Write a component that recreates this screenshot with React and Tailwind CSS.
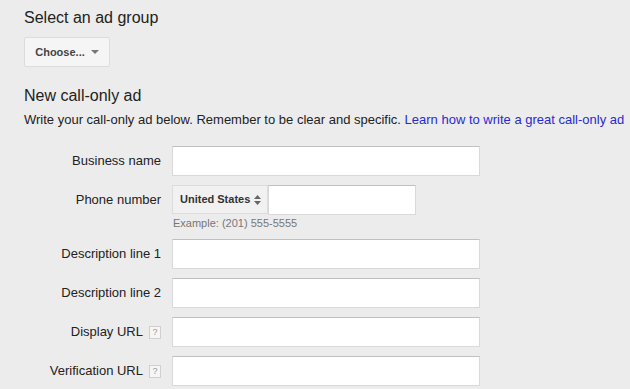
import React from 'react';

const Help = () => (
  <span className="ml-[6px] inline-flex h-[13px] w-[12px] items-center justify-center border border-[#d0d0d0] bg-[#f6f6f6] text-[9px] leading-none text-[#999]">
    ?
  </span>
);

const Field = ({ label, help, children }) => (
  <div className="flex items-start">
    <div className="flex h-[30px] w-[137px] items-center justify-end text-[13px] text-[#222]">
      {label}
      {help && <Help />}
    </div>
    <div className="ml-[11px]">{children}</div>
  </div>
);

const TextBox = ({ w = 'w-[308px]' }) => (
  <input
    className={`${w} h-[30px] border border-[#d9d9d9] border-t-[#c0c0c0] bg-white outline-none`}
  />
);

export default function App() {
  return (
    <div className="min-h-[389px] w-full bg-[#ececec] pl-[24px] pt-[8px] font-['Liberation_Sans',Arial,sans-serif] text-[#222]">
      <h2 className="text-[16px] leading-[20px]">Select an ad group</h2>
      <button className="mt-[9px] flex h-[30px] w-[86px] items-center justify-center gap-[6px] rounded-[2px] border border-[#dcdcdc] bg-[#f5f5f5] text-[11px] font-bold text-[#444]">
        Choose...
        <span className="h-0 w-0 border-x-[4px] border-t-[4px] border-x-transparent border-t-[#777]" />
      </button>

      <h2 className="mt-[19px] text-[16px] leading-[20px]">New call-only ad</h2>
      <p className="mt-[6px] text-[13px] leading-[16px] whitespace-nowrap">
        Write your call-only ad below. Remember to be clear and specific.{' '}
        <a className="text-[#2a2ad2]">Learn how to write a great call-only ad</a>
      </p>

      <div className="mt-[18px] flex flex-col gap-[9px]">
        <Field label="Business name">
          <TextBox />
        </Field>
        <Field label="Phone number">
          <div className="flex">
            <div className="flex h-[29px] w-[96px] items-center justify-between border border-[#dcdcdc] bg-[#f1f1f1] pl-[7px] pr-[6px] text-[11px] font-bold text-[#333]">
              United States
              <svg width="7" height="10" viewBox="0 0 7 10">
                <path d="M3.5 0L7 4H0z" fill="#666" />
                <path d="M3.5 10L7 6H0z" fill="#666" />
              </svg>
            </div>
            <TextBox w="w-[148px]" />
          </div>
          <div className="mt-[1px] pl-[1px] text-[11px] leading-[14px] text-[#777]">Example: (201) 555-5555</div>
        </Field>
        <Field label="Description line 1">
          <TextBox />
        </Field>
        <Field label="Description line 2">
          <TextBox />
        </Field>
        <Field label="Display URL" help>
          <TextBox />
        </Field>
        <Field label="Verification URL" help>
          <TextBox />
        </Field>
      </div>
    </div>
  );
}
